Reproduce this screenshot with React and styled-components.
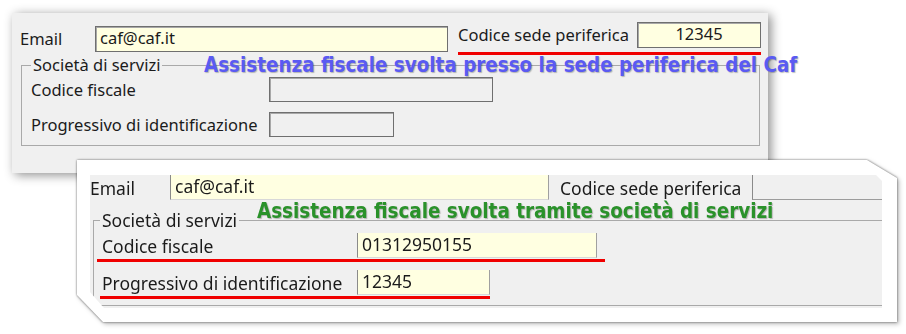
import React from "react";
import styled, { createGlobalStyle } from "styled-components";

const GlobalStyle = createGlobalStyle`
  html, body {
    margin: 0;
    padding: 0;
    background: #fff;
  }
  body {
    font-family: "Noto Sans", "Liberation Sans", sans-serif;
    color: #1b1b1b;
  }
`;

const Page = styled.div`
  width: 906px;
  height: 334px;
  box-sizing: border-box;
  padding: 13px 0 0 12px;
  overflow: hidden;
  background: #fff;
`;

// first screenshot: plain window with soft shadow
const Window = styled.div`
  position: relative;
  width: 756px;
  height: 160px;
  box-sizing: border-box;
  padding: 9px 7px 0 8px;
  background: #f0f0f0;
  font-size: 16.5px;
  box-shadow: 3px 2px 10px rgba(0, 0, 0, 0.45);
`;

// second screenshot: white torn frame with cut corners
const Frame = styled.div`
  width: 820px;
  height: 162px;
  margin: -13px 0 0 65px;
  filter: drop-shadow(0 0 1px rgba(0, 0, 0, 0.55))
    drop-shadow(2px 2px 2px rgba(0, 0, 0, 0.25));
`;

const FrameFace = styled.div`
  height: 100%;
  box-sizing: border-box;
  padding: 15px 15px 14px 13px;
  background: #fff;
  clip-path: polygon(
    0 0,
    790px 0,
    100% 18px,
    100% 100%,
    26px 100%,
    0 135px
  );
`;

const Shot = styled.div`
  height: 100%;
  background: #f0f0f0;
  font-size: 17.5px;
  clip-path: polygon(
    0 0,
    calc(100% - 6px) 0,
    100% 6px,
    100% 100%,
    14px 100%,
    0 calc(100% - 16px)
  );
`;

const Row = styled.div`
  display: flex;
  align-items: center;
  margin-top: ${(p) => p.$top || 0}px;
`;

const Label = styled.span`
  width: ${(p) => p.$w}px;
  flex: none;
  margin-left: ${(p) => p.$ml || 0}px;
  line-height: 20px;
  white-space: nowrap;
`;

const Field = styled.div`
  width: ${(p) => p.$w}px;
  height: ${(p) => p.$h || 25}px;
  flex: none;
  box-sizing: border-box;
  padding: 0 4px;
  background: ${(p) => (p.$empty ? "#f0f0f0" : "#ffffe1")};
  border: 1px solid #6f6f6f;
  box-shadow: inset 1px 1px 0 #a8a8a8;
  line-height: 22px;
  text-align: ${(p) => (p.$center ? "center" : "left")};
  white-space: nowrap;
`;

const FlatField = styled(Field)`
  border: none;
  border-left: 1px solid #8a8a8a;
  border-right: 1px solid #a0a0a0;
  border-bottom: 1px solid #d8d8d8;
  box-shadow: none;
  line-height: 23px;
`;

const StubBox = styled.div`
  width: 130px;
  height: 25px;
  flex: none;
  box-sizing: border-box;
  border-left: 1px solid #8a8a8a;
  border-bottom: 1px solid #9c9c9c;
`;

const Marked = styled.div`
  display: flex;
  align-items: center;
  justify-content: space-between;
  width: ${(p) => (p.$w ? `${p.$w}px` : "fit-content")};
  box-sizing: border-box;
  margin-left: ${(p) => p.$ml || 0}px;
  padding: 0 ${(p) => p.$pr || 0}px ${(p) => p.$pb || 0}px
    ${(p) => p.$pl || 0}px;
  border-bottom: 3px solid #f00000;
`;

const Group = styled.div`
  position: relative;
  width: ${(p) => p.$w}px;
  margin: ${(p) => p.$top}px 0 0 ${(p) => p.$left}px;
`;

const Fieldset = styled.fieldset`
  margin: 0;
  min-width: 0;
  padding: 0 0 ${(p) => p.$pb}px ${(p) => p.$pl}px;
  border: 1px solid #a9a9a9;
  ${(p) => p.$open && "border-right: none;"}
`;

const Legend = styled.legend`
  margin-left: ${(p) => p.$ml || 0}px;
  padding: 0 2px;
  line-height: 18px;
`;

const Note = styled.div`
  position: absolute;
  left: ${(p) => p.$left}px;
  top: ${(p) => p.$top}px;
  font-family: "DejaVu Sans Condensed", "DejaVu Sans", sans-serif;
  font-weight: bold;
  font-size: 20.4px;
  line-height: 22px;
  white-space: nowrap;
  color: ${(p) => p.$color};
  text-shadow: 1px 1px 1px rgba(0, 0, 0, 0.25);
`;

export default function App() {
  return (
    <Page>
      <GlobalStyle />
      <Window>
        <Row>
          <Label $w={75}>Email</Label>
          <Field $w={353} $h={26}>caf@caf.it</Field>
          <Marked $w={303} $ml={10} $pb={4}>
            <Label $w={176}>Codice sede periferica</Label>
            <Field $w={124} $h={26} $center>
              12345
            </Field>
          </Marked>
        </Row>
        <Group $w={739} $left={1} $top={1}>
          <Fieldset $pl={9} $pb={8}>
            <Legend>Società di servizi</Legend>
            <Row $top={3}>
              <Label $w={238}>Codice fiscale</Label>
              <Field $w={224} $empty />
            </Row>
            <Row $top={10}>
              <Label $w={238}>Progressivo di identificazione</Label>
              <Field $w={125} $empty />
            </Row>
          </Fieldset>
          <Note $left={183} $top={-2} $color="#5a5af2">
            Assistenza fiscale svolta presso la sede periferica del Caf
          </Note>
        </Group>
      </Window>

      <Frame>
        <FrameFace>
          <Shot>
            <Row>
              <Label $w={80}>Email</Label>
              <FlatField $w={379}>caf@caf.it</FlatField>
              <Label $w={192} $ml={11}>
                Codice sede periferica
              </Label>
              <StubBox />
            </Row>
            <Group $w={789} $left={3} $top={11}>
              <Fieldset $pl={8} $pb={6} $open>
                <Legend $ml={-2}>Società di servizi</Legend>
                <Row $top={4}>
                  <Marked $ml={-5} $pl={5} $pr={8} $pb={1}>
                    <Label $w={255}>Codice fiscale</Label>
                    <FlatField $w={240}>01312950155</FlatField>
                  </Marked>
                </Row>
                <Row $top={8}>
                  <Marked $ml={-2} $pl={2} $pb={1}>
                    <Label $w={255}>Progressivo di identificazione</Label>
                    <FlatField $w={133}>12345</FlatField>
                  </Marked>
                </Row>
              </Fieldset>
              <Note $left={164} $top={-11} $color="#2a922a">
                Assistenza fiscale svolta tramite società di servizi
              </Note>
            </Group>
          </Shot>
        </FrameFace>
      </Frame>
    </Page>
  );
}
